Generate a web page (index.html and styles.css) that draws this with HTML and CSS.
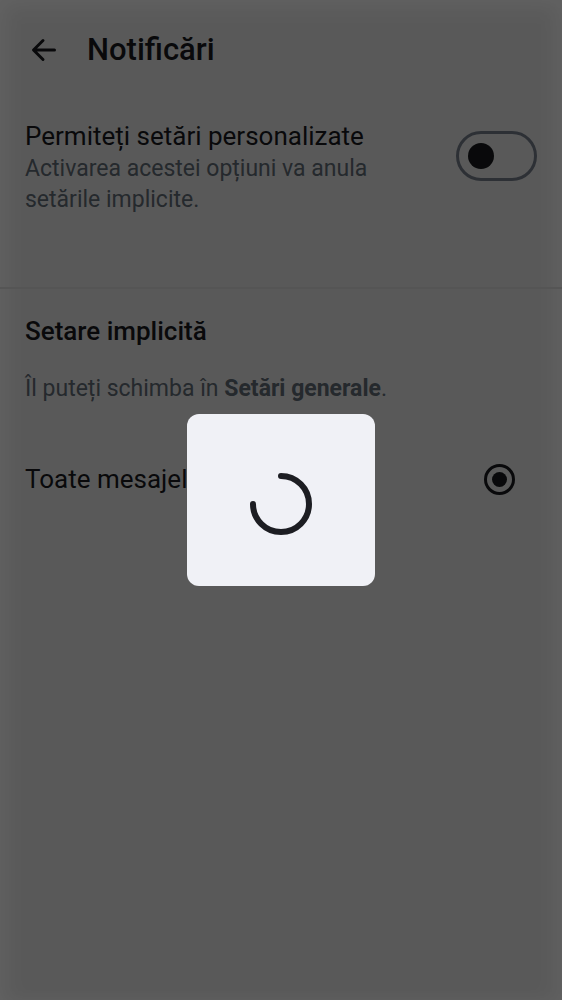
FILE: index.html
```html
<!DOCTYPE html>
<html lang="ro">
<head>
<meta charset="utf-8">
<meta name="viewport" content="width=device-width, initial-scale=1">
<title>Notificări</title>
<link rel="stylesheet" href="styles.css">
</head>
<body>
<div class="screen">
  <header class="app-bar">
    <button class="back" type="button" aria-label="Înapoi">
      <svg viewBox="0 0 26 26" width="26" height="26" aria-hidden="true"><path d="M23.500 13H3M12 3.500 2.500 13 12 22.500" fill="none" stroke="currentColor" stroke-width="3" stroke-linecap="round" stroke-linejoin="round"/></svg>
    </button>
    <h1 class="title">Notificări</h1>
  </header>
  <main>
    <section class="custom">
      <div class="custom-text">
        <label class="label" for="custom">Permiteți setări personalizate</label>
        <p class="hint" id="custom-hint">Activarea acestei opțiuni va anula setările implicite.</p>
      </div>
      <input class="switch" type="checkbox" role="switch" id="custom" aria-describedby="custom-hint">
    </section>
    <section class="defaults">
      <h2 class="subtitle">Setare implicită</h2>
      <p class="hint">Îl puteți schimba în <a class="link" href="#general">Setări generale</a>.</p>
      <div class="option">
        <label class="label" for="all">Toate mesajele</label>
        <input class="radio" type="radio" name="messages" id="all" checked>
      </div>
    </section>
  </main>
</div>
<div class="scrim">
  <div class="loading" role="dialog" aria-modal="true" aria-label="Se încarcă">
    <svg viewBox="0 0 64 64" width="64" height="64" aria-hidden="true"><path d="M32 4A28 28 0 1 1 4 32" fill="none" stroke="currentColor" stroke-width="6" stroke-linecap="round"/></svg>
  </div>
</div>
</body>
</html>
```
FILE: styles.css
```css
* {
  box-sizing: border-box;
}

body {
  margin: 0;
  font-family: Roboto, "Noto Sans", sans-serif;
  color: #181a1d;
}

h1, h2, p {
  margin: 0;
}

.screen {
  min-height: 100vh;
  background: #ebebeb;
  box-shadow: inset 0 8px 24px -4px #fff, inset 12px 0 24px -10px #fff, inset -12px 0 24px -10px #fff;
}

.app-bar {
  display: flex;
  align-items: center;
  gap: 30px;
  padding: 25px 24px 0 31px;
}

.back {
  display: flex;
  padding: 0;
  border: 0;
  background: none;
  color: inherit;
}

.title {
  font-size: 31px;
  line-height: 50px;
  font-weight: 500;
}

.custom {
  display: flex;
  justify-content: space-between;
  gap: 24px;
  padding: 44px 25px 72px;
  border-bottom: 2px solid #dfdfdf;
}

.custom-text {
  max-width: 360px;
}

.label {
  display: block;
  font-size: 26px;
  line-height: 34px;
}

.hint {
  font-size: 23px;
  line-height: 31px;
  color: #616c76;
}

.link {
  color: inherit;
  font-weight: 700;
  text-decoration: none;
}

.switch {
  appearance: none;
  display: flex;
  align-items: center;
  flex: none;
  width: 81px;
  height: 50px;
  margin: 12px 0 0;
  padding: 0 9px;
  border: 3px solid #767f8c;
  border-radius: 25px;
}

.switch::before {
  content: "";
  width: 26px;
  height: 26px;
  border-radius: 50%;
  background: #181a1d;
}

.defaults {
  padding: 25px;
}

.subtitle {
  margin-bottom: 25px;
  font-size: 26px;
  line-height: 34px;
  font-weight: 500;
}

.option {
  display: flex;
  align-items: center;
  justify-content: space-between;
  padding: 58px 22px 0 0;
}

.radio {
  appearance: none;
  display: grid;
  place-items: center;
  width: 31px;
  height: 31px;
  margin: 0;
  border: 3px solid #181a1d;
  border-radius: 50%;
}

.radio:checked::before {
  content: "";
  width: 15px;
  height: 15px;
  border-radius: 50%;
  background: #181a1d;
}

.scrim {
  position: fixed;
  inset: 0;
  display: grid;
  place-items: center;
  background: rgba(0, 0, 0, 0.62);
}

.loading {
  padding: 58px 62px 50px;
  border-radius: 12px;
  background: #f0f1f6;
  color: #1c1d22;
}

.loading svg {
  display: block;
}
```
